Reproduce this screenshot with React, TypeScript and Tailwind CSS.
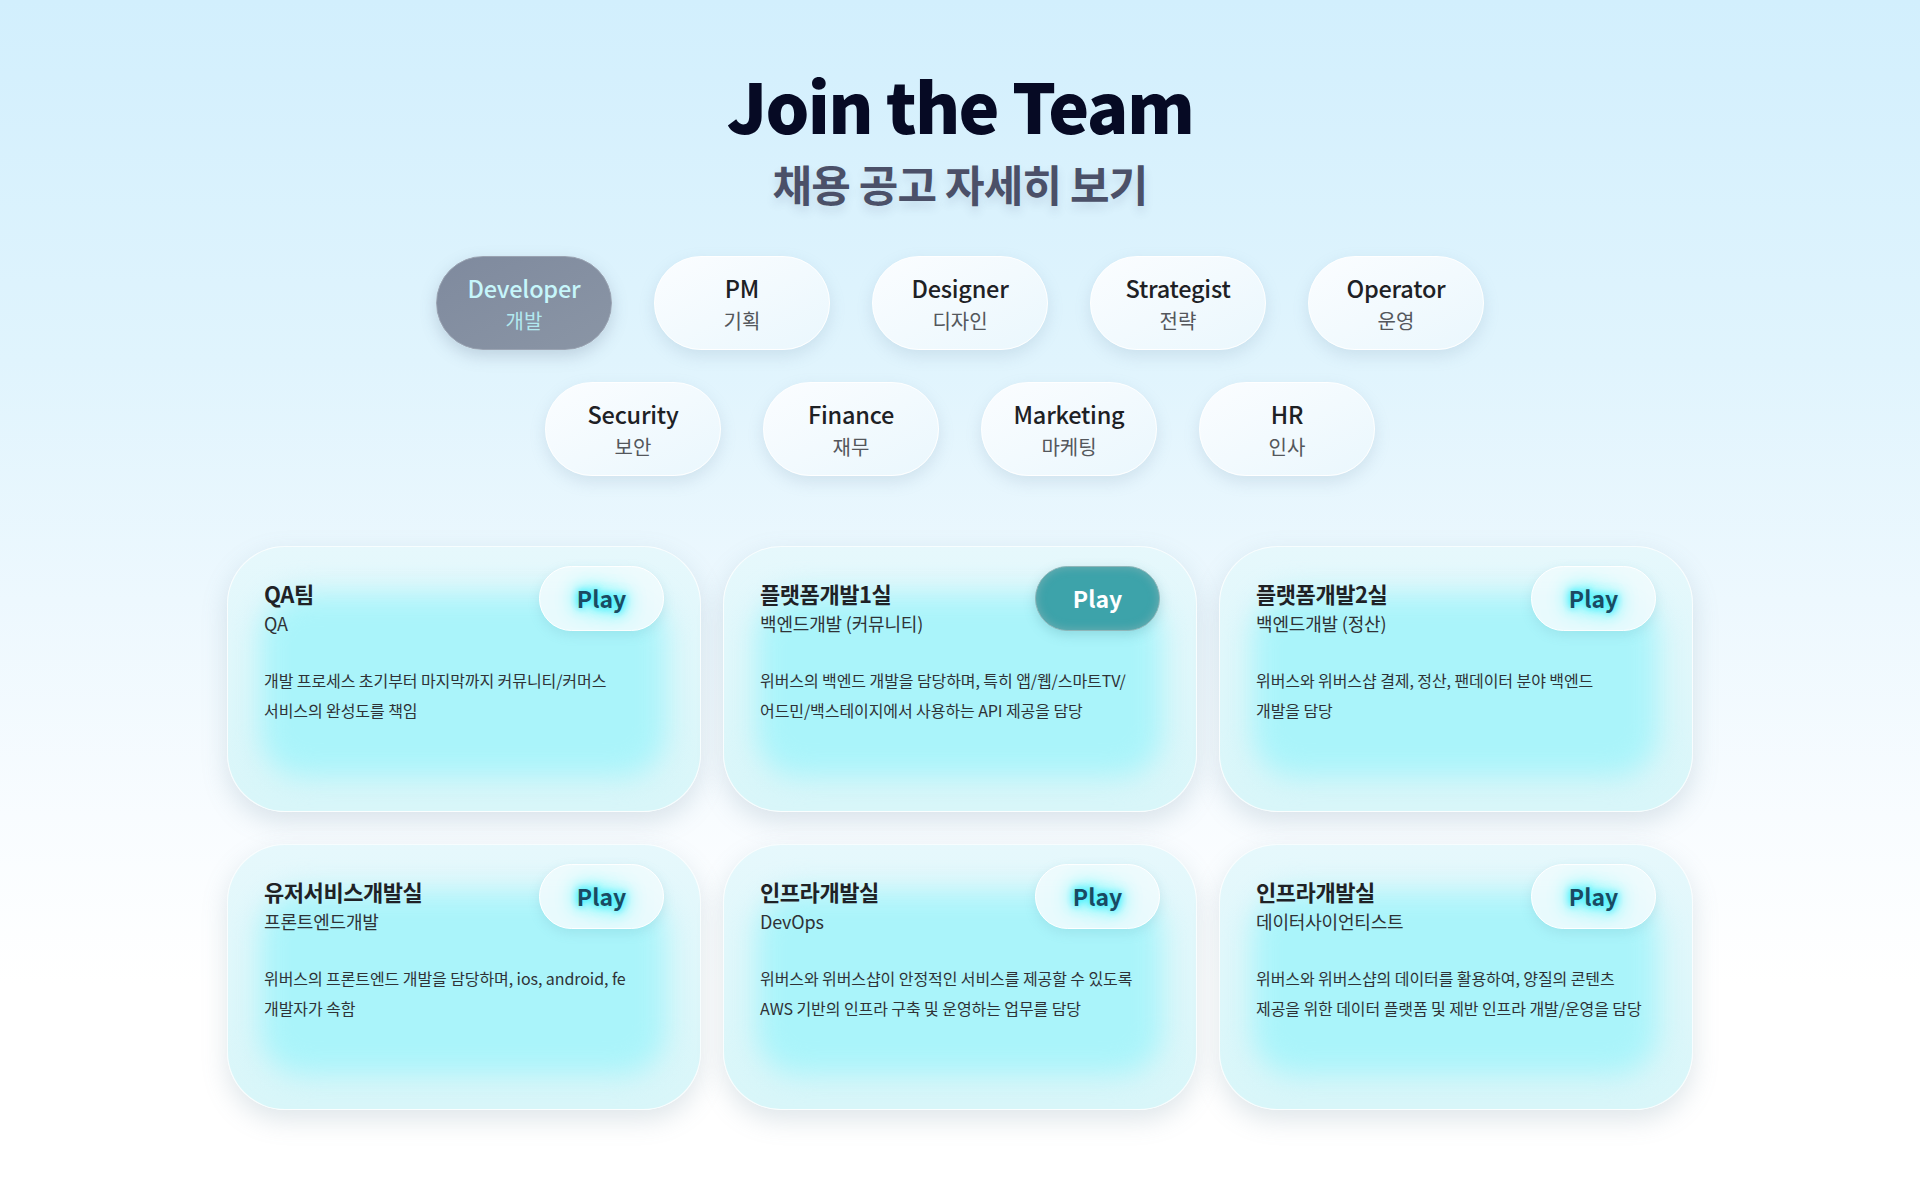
import React from "react";

type Role = { en: string; ko: string };

const ROW_ONE: Role[] = [
  { en: "Developer", ko: "개발" },
  { en: "PM", ko: "기획" },
  { en: "Designer", ko: "디자인" },
  { en: "Strategist", ko: "전략" },
  { en: "Operator", ko: "운영" },
];

const ROW_TWO: Role[] = [
  { en: "Security", ko: "보안" },
  { en: "Finance", ko: "재무" },
  { en: "Marketing", ko: "마케팅" },
  { en: "HR", ko: "인사" },
];

type Team = {
  name: string;
  part: string;
  lines: string[];
  active?: boolean;
};

const TEAMS: Team[] = [
  {
    name: "QA팀",
    part: "QA",
    lines: ["개발 프로세스 초기부터 마지막까지 커뮤니티/커머스", "서비스의 완성도를 책임"],
  },
  {
    name: "플랫폼개발1실",
    part: "백엔드개발 (커뮤니티)",
    lines: ["위버스의 백엔드 개발을 담당하며, 특히 앱/웹/스마트TV/", "어드민/백스테이지에서 사용하는 API 제공을 담당"],
    active: true,
  },
  {
    name: "플랫폼개발2실",
    part: "백엔드개발 (정산)",
    lines: ["위버스와 위버스샵 결제, 정산, 팬데이터 분야 백엔드", "개발을 담당"],
  },
  {
    name: "유저서비스개발실",
    part: "프론트엔드개발",
    lines: ["위버스의 프론트엔드 개발을 담당하며, ios, android, fe", "개발자가 속함"],
  },
  {
    name: "인프라개발실",
    part: "DevOps",
    lines: ["위버스와 위버스샵이 안정적인 서비스를 제공할 수 있도록", "AWS 기반의 인프라 구축 및 운영하는 업무를 담당"],
  },
  {
    name: "인프라개발실",
    part: "데이터사이언티스트",
    lines: ["위버스와 위버스샵의 데이터를 활용하여, 양질의 콘텐츠", "제공을 위한 데이터 플랫폼 및 제반 인프라 개발/운영을 담당"],
  },
];

function RolePill({ role, selected }: { role: Role; selected?: boolean }) {
  return (
    <button
      className={
        selected
          ? "w-[176px] h-[94px] rounded-full flex flex-col items-center justify-center bg-gradient-to-br from-[#7f8a9e] to-[#8a95a5] border border-[#9aa3b2] shadow-[0_6px_16px_rgba(90,110,140,0.25)]"
          : "w-[176px] h-[94px] rounded-full flex flex-col items-center justify-center bg-gradient-to-br from-[#fbfdff] to-[#eaf7fd] border border-white shadow-[0_6px_16px_rgba(120,150,175,0.2)]"
      }
    >
      <span
        className={
          selected
            ? "text-[23.5px] leading-[30px] font-medium tracking-[-0.01em] text-[#c6f6fb]"
            : "text-[23.5px] leading-[30px] font-medium tracking-[-0.01em] text-[#1e2125]"
        }
      >
        {role.en}
      </span>
      <span
        className={
          selected
            ? "text-[20px] leading-[26px] mt-[5px] text-[#b2e9f0]"
            : "text-[20px] leading-[26px] mt-[5px] text-[#54575c]"
        }
      >
        {role.ko}
      </span>
    </button>
  );
}

function PlayButton({ active }: { active?: boolean }) {
  if (active) {
    return (
      <button className="w-[125px] h-[65px] shrink-0 rounded-full bg-[#3da3aa] border border-[#8fb6b9] shadow-[inset_0_0_10px_rgba(120,175,180,0.9),0_4px_12px_rgba(60,140,150,0.25)] flex items-center justify-center">
        <span className="text-[23px] font-bold text-white">Play</span>
      </button>
    );
  }
  return (
    <button className="w-[125px] h-[65px] shrink-0 rounded-full bg-[#effbfd]/90 border border-white shadow-[0_4px_12px_rgba(100,160,180,0.18)] flex items-center justify-center">
      <span className="text-[23px] font-bold text-[#1b4a62] [text-shadow:0_0_6px_#2ff0ff,0_0_12px_#2ff0ff,0_0_20px_#3ef2ff,0_0_28px_#6ff5ff]">
        Play
      </span>
    </button>
  );
}

function TeamCard({ team }: { team: Team }) {
  return (
    <div className="relative h-[266px] rounded-[58px] overflow-hidden bg-gradient-to-b from-[#e6f8fc] to-[#d8f6f9] border border-white/80 shadow-[0_10px_26px_rgba(110,140,160,0.22)]">
      <div className="absolute left-[32px] right-[34px] top-[46px] bottom-[34px] rounded-[44px] bg-[#aaf4fa] blur-[14px]" />
      <div className="relative pt-[19px] px-[36px]">
        <div className="flex justify-between items-start">
          <div className="pt-[11px]">
            <div className="text-[22px] leading-[32px] font-bold tracking-[-0.02em] text-[#1f2226]">{team.name}</div>
            <div className="text-[18px] leading-[24px] mt-[2px] tracking-[-0.01em] text-[#2f3236]">{team.part}</div>
          </div>
          <PlayButton active={team.active} />
        </div>
        <div className="mt-[30px] text-[16px] leading-[30px] tracking-[-0.005em] text-[#2f3236]">
          {team.lines.map((l) => (
            <div key={l} className="whitespace-nowrap">
              {l}
            </div>
          ))}
        </div>
      </div>
    </div>
  );
}

export default function App() {
  return (
    <div className="min-h-[1200px] w-full bg-[linear-gradient(180deg,#d2effd_0%,#e0f4fd_30%,#edf8fe_50%,#f8fcff_68%,#ffffff_82%)] flex flex-col items-center font-['Noto_Sans_CJK_KR','Noto_Sans',sans-serif]">
      <h1 className="mt-[68px] text-[69px] leading-[72px] font-black tracking-[-0.025em] text-[#060a24]">Join the Team</h1>
      <p className="mt-[18px] text-[43px] leading-[50px] font-bold tracking-[-0.02em] text-[#4b5068] [text-shadow:0_6px_10px_rgba(70,90,120,0.15)]">
        채용 공고 자세히 보기
      </p>

      <div className="mt-[48px] flex flex-col items-center gap-[32px]">
        <div className="flex gap-[42px]">
          {ROW_ONE.map((r, i) => (
            <RolePill key={r.en} role={r} selected={i === 0} />
          ))}
        </div>
        <div className="flex gap-[42px]">
          {ROW_TWO.map((r) => (
            <RolePill key={r.en} role={r} />
          ))}
        </div>
      </div>

      <div className="mt-[70px] w-[1466px] grid grid-cols-3 gap-x-[22px] gap-y-[32px]">
        {TEAMS.map((t, i) => (
          <TeamCard key={i} team={t} />
        ))}
      </div>
    </div>
  );
}
